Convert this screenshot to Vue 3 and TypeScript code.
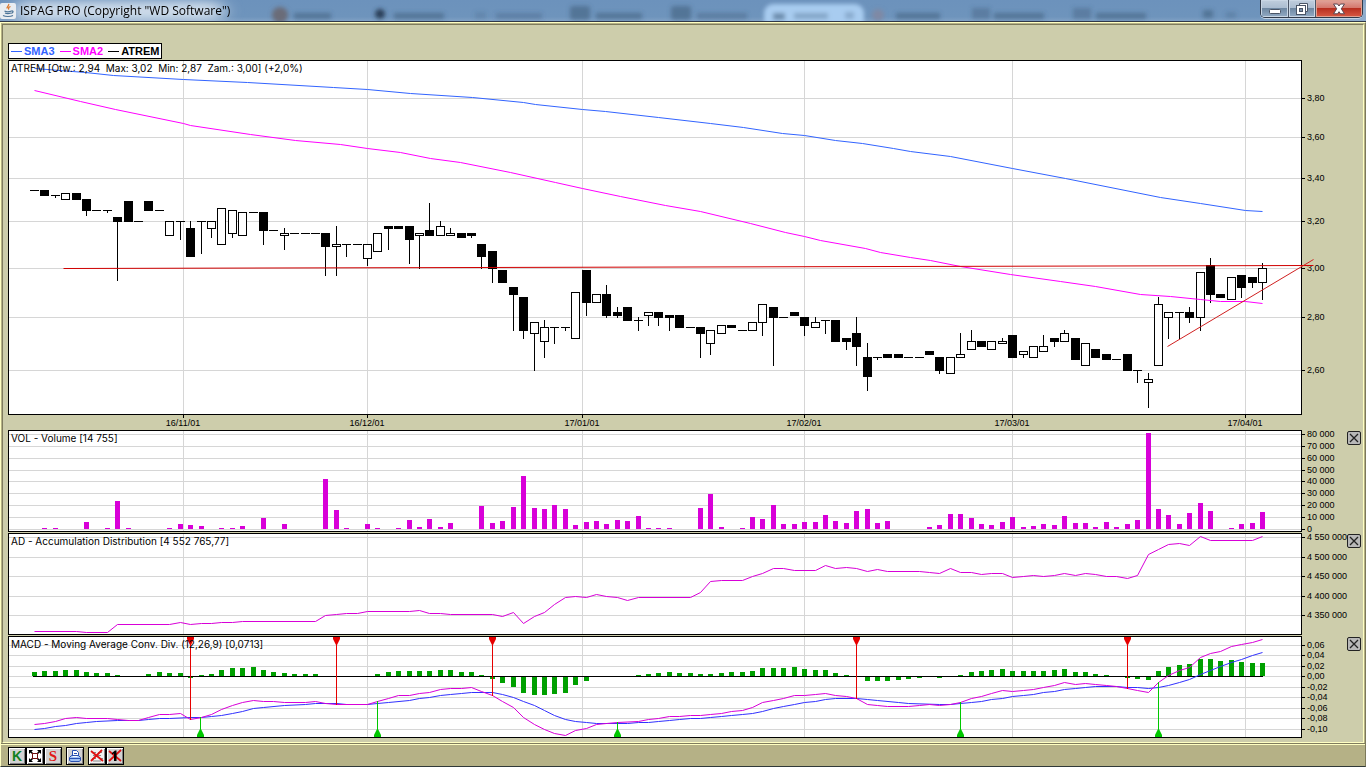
<script setup lang="ts">
type Kind = 'd' | 'f' | 'h'
type Candle = [Kind, number, number, number?, number?]
type Point = [number, number]

const step = 1228 / 118
const cx = (i: number): number => Math.round(34 + step * i)

// kind (dash, filled, hollow), body top, body bottom, high, low
const candles: Candle[] = [
  ['d', 190, 190], ['f', 190, 195], ['d', 195, 195, 195, 197], ['h', 193, 199], ['f', 193, 199],
  ['f', 199, 210, 199, 215], ['d', 210, 210], ['d', 210, 210, 210, 212], ['f', 217, 221, 217, 280], ['f', 201, 221],
  ['d', 221, 221], ['f', 201, 210], ['d', 210, 210], ['h', 221, 235], ['d', 221, 221, 221, 239],
  ['f', 228, 256, 221, 256], ['d', 221, 221, 221, 253], ['h', 221, 228, 221, 237], ['h', 208, 244], ['h', 210, 233, 210, 237],
  ['h', 212, 235], ['d', 212, 212], ['f', 212, 230, 212, 244], ['d', 230, 230], ['h', 233, 235, 228, 249],
  ['d', 233, 233], ['d', 233, 233], ['d', 233, 233], ['f', 233, 246, 233, 275], ['h', 244, 246, 226, 275],
  ['d', 244, 244, 244, 256], ['d', 244, 244], ['h', 244, 258, 244, 265], ['h', 233, 251], ['f', 226, 228, 226, 249],
  ['f', 226, 228], ['f', 226, 239, 226, 263], ['h', 233, 235, 233, 268], ['f', 230, 235, 203, 235], ['h', 226, 235, 221, 235],
  ['h', 233, 235, 228, 235], ['f', 233, 237], ['f', 233, 235, 233, 237], ['f', 244, 256, 244, 268], ['f', 251, 268, 251, 282],
  ['f', 270, 282], ['f', 287, 294, 287, 330], ['f', 297, 330, 297, 338], ['h', 322, 333, 322, 370], ['h', 327, 341, 320, 357],
  ['d', 327, 327, 327, 343], ['d', 327, 327, 327, 330], ['h', 292, 338], ['f', 270, 302, 270, 315], ['h', 294, 302],
  ['f', 294, 315, 285, 317], ['f', 312, 315, 307, 317], ['f', 307, 320], ['d', 320, 320, 317, 330], ['h', 312, 315, 312, 325],
  ['f', 312, 317, 312, 325], ['f', 315, 317, 315, 330], ['f', 315, 327], ['d', 327, 327], ['f', 327, 333, 327, 357],
  ['h', 330, 343, 330, 354], ['h', 325, 333], ['f', 325, 327], ['d', 330, 330], ['h', 322, 330],
  ['h', 304, 322, 304, 335], ['f', 307, 317, 307, 365], ['d', 317, 317], ['f', 312, 315], ['f', 317, 325, 317, 335],
  ['h', 322, 327, 317, 327], ['d', 320, 320, 320, 333], ['f', 320, 341], ['f', 338, 341, 338, 349], ['f', 333, 346, 317, 365],
  ['f', 357, 376, 343, 390], ['d', 357, 357, 357, 359], ['f', 354, 357], ['f', 354, 357], ['d', 357, 357],
  ['d', 357, 357], ['f', 351, 354], ['f', 357, 370, 357, 373], ['h', 357, 373], ['h', 354, 357, 333, 357],
  ['h', 341, 349, 330, 349], ['f', 341, 346], ['h', 341, 349], ['h', 341, 343, 338, 343], ['f', 335, 357],
  ['h', 351, 354, 351, 357], ['h', 346, 357], ['h', 346, 351, 335, 351], ['f', 338, 341, 338, 346], ['h', 333, 341, 330, 341],
  ['f', 338, 359], ['h', 343, 365], ['f', 349, 357], ['f', 354, 359], ['d', 359, 359],
  ['f', 354, 370], ['d', 370, 370, 370, 382], ['h', 379, 382, 373, 407], ['h', 304, 365, 297, 365], ['h', 312, 317, 312, 338],
  ['d', 312, 312, 312, 338], ['f', 312, 317, 307, 322], ['h', 272, 317, 272, 330], ['f', 265, 294, 258, 302], ['f', 294, 297],
  ['h', 277, 299], ['f', 275, 287, 275, 297], ['f', 277, 282, 277, 287], ['h', 268, 282, 263, 299],
]

const volume: number[] = [
  0, 1, 1, 0, 0, 7, 0, 1, 28, 1, 0, 0, 0, 1, 5, 4, 3, 0, 1, 1, 3, 0, 11, 0, 5, 0, 0, 0, 50, 19,
  1, 0, 5, 1, 0, 1, 9, 2, 10, 2, 6, 0, 0, 23, 6, 8, 22, 53, 21, 20, 24, 20, 4, 7, 8, 5, 9, 8, 13, 1,
  1, 1, 0, 0, 21, 35, 2, 0, 1, 12, 10, 24, 5, 5, 7, 7, 14, 8, 6, 18, 20, 6, 8, 0, 0, 0, 2, 4, 15, 15,
  11, 5, 4, 7, 12, 2, 3, 5, 4, 13, 6, 6, 2, 7, 2, 5, 9, 96, 20, 14, 5, 16, 26, 18, 0, 1, 5, 6, 17,
]

const histogram: number[] = [
  4, 5, 5, 6, 6, 4, 3, 3, 1, 0, 0, 2, 4, 3, 3, -1, 1, 2, 6, 8, 8, 9, 6, 4, 3, 2, 2, 2, 0, 0,
  0, 0, 0, 2, 4, 5, 5, 5, 5, 6, 6, 4, 4, 1, -2, -6, -10, -16, -18, -18, -17, -16, -8, -4, 0, 0, 0, 0, 1, 2,
  3, 4, 3, 3, 2, 2, 3, 4, 4, 5, 8, 8, 8, 9, 7, 6, 6, 3, 1, 0, -4, -4, -4, -3, -2, -1, 0, -1, 0, 1,
  4, 5, 6, 7, 5, 5, 5, 5, 6, 7, 4, 4, 2, 1, 0, -1, -2, -3, 5, 9, 11, 12, 17, 17, 15, 16, 14, 13, 13,
]

const toPoints = (pts: Point[]): string => pts.map(([x, y]) => `${x},${y}`).join(' ')
const seriesPoints = (pts: Point[]): string => pts.map(([i, y]) => `${cx(i)},${y}`).join(' ')

const sma3 = toPoints([
  [34, 68], [85, 72], [113, 75], [183, 79], [247, 82], [333, 87], [367, 89], [410, 93], [472, 97], [523, 102],
  [535, 104], [582, 109], [605, 111], [658, 117], [710, 123], [743, 127], [782, 133], [804, 135], [835, 140],
  [862, 143], [893, 148], [910, 151], [950, 156], [1012, 168], [1065, 178], [1160, 197], [1200, 203], [1245, 210], [1262, 211],
])
const sma2 = toPoints([
  [34, 90], [80, 101], [115, 109], [183, 123], [190, 125], [250, 134], [295, 140], [340, 144], [367, 148], [400, 152],
  [430, 158], [460, 162], [510, 172], [555, 182], [582, 188], [620, 196], [665, 205], [700, 211], [750, 223],
  [785, 232], [804, 236], [820, 240], [865, 248], [880, 252], [910, 257], [930, 260], [960, 266], [1010, 274],
  [1060, 281], [1095, 286], [1140, 294], [1170, 296], [1200, 299], [1220, 301], [1245, 301], [1262, 303],
])
const adLine = seriesPoints([
  [0, 631], [4, 631], [5, 632], [7, 632], [8, 624], [13, 624], [14, 622], [15, 624], [16, 623], [17, 623],
  [18, 622], [19, 622], [20, 621], [27, 621], [28, 615], [29, 614], [30, 613], [31, 613], [32, 611], [36, 611],
  [37, 610], [38, 613], [39, 613], [40, 614], [44, 614], [45, 616], [46, 612], [47, 623], [48, 616], [49, 612],
  [50, 604], [51, 597], [52, 596], [53, 597], [54, 594], [55, 596], [56, 597], [57, 600], [58, 597], [63, 597],
  [64, 592], [65, 581], [66, 580], [68, 580], [69, 576], [70, 573], [71, 568], [72, 568], [73, 570], [75, 570],
  [76, 565], [77, 568], [78, 567], [79, 568], [80, 571], [81, 569], [82, 571], [85, 571], [86, 572], [87, 573],
  [88, 568], [89, 572], [90, 572], [91, 574], [92, 573], [93, 573], [94, 577], [95, 576], [96, 575], [97, 576],
  [98, 575], [99, 573], [100, 575], [101, 573], [102, 574], [103, 576], [104, 576], [105, 578], [106, 575],
  [107, 554], [108, 549], [109, 544], [110, 543], [111, 545], [112, 536], [113, 540], [117, 540], [118, 536],
])
const macdLine = seriesPoints([
  [0, 724], [1, 723], [2, 721], [3, 718], [4, 717], [5, 718], [7, 718], [8, 719], [9, 720], [10, 720], [11, 717],
  [12, 714], [13, 714], [14, 713], [15, 719], [16, 717], [17, 714], [18, 709], [19, 705], [20, 702], [21, 700],
  [22, 701], [23, 701], [24, 702], [26, 702], [27, 701], [28, 703], [29, 704], [32, 704], [33, 701], [34, 698],
  [35, 695], [36, 695], [37, 693], [38, 692], [39, 689], [40, 688], [41, 688], [42, 687], [43, 691], [44, 695],
  [45, 701], [46, 707], [47, 717], [48, 724], [49, 729], [50, 733], [51, 735], [52, 730], [53, 728], [54, 724],
  [55, 723], [56, 722], [58, 721], [59, 719], [60, 718], [61, 716], [62, 716], [63, 715], [64, 715], [65, 714],
  [66, 713], [67, 711], [68, 710], [69, 707], [70, 702], [71, 700], [72, 698], [73, 695], [74, 695], [75, 694],
  [76, 693], [77, 695], [78, 696], [79, 698], [80, 704], [81, 705], [82, 706], [84, 706], [85, 705], [86, 704],
  [87, 705], [88, 704], [89, 702], [90, 698], [91, 696], [92, 693], [93, 690], [94, 691], [95, 690], [96, 689],
  [97, 687], [98, 685], [99, 682], [100, 684], [101, 683], [102, 684], [103, 685], [104, 686], [105, 688],
  [106, 690], [107, 692], [108, 682], [109, 675], [110, 670], [111, 667], [112, 657], [113, 653], [114, 651],
  [115, 646], [116, 644], [117, 642], [118, 639],
])
const signalLine = seriesPoints([
  [0, 729], [1, 728], [2, 726], [3, 725], [4, 723], [5, 722], [6, 721], [8, 720], [10, 720], [11, 719], [12, 718],
  [13, 718], [15, 717], [16, 717], [17, 716], [18, 715], [19, 713], [20, 711], [21, 708], [22, 707], [24, 705],
  [26, 704], [27, 703], [29, 703], [30, 704], [32, 704], [33, 703], [34, 702], [36, 700], [37, 698], [38, 697],
  [39, 695], [40, 694], [41, 693], [42, 692], [44, 692], [45, 694], [46, 697], [47, 701], [48, 705], [49, 710],
  [50, 715], [51, 719], [52, 721], [53, 722], [54, 723], [57, 723], [58, 722], [59, 722], [60, 721], [61, 720],
  [62, 719], [63, 718], [64, 718], [65, 717], [66, 716], [67, 715], [68, 714], [69, 713], [70, 711], [71, 708],
  [72, 706], [73, 704], [74, 702], [75, 701], [76, 699], [77, 698], [79, 698], [80, 699], [81, 700], [83, 702],
  [84, 703], [87, 704], [88, 704], [89, 703], [90, 702], [91, 701], [92, 699], [93, 698], [94, 696], [95, 695],
  [96, 694], [97, 692], [98, 691], [99, 689], [100, 688], [101, 687], [102, 686], [104, 686], [105, 687],
  [106, 687], [107, 688], [108, 687], [109, 685], [110, 682], [111, 679], [112, 674], [113, 670], [114, 666],
  [115, 662], [116, 659], [117, 655], [118, 652],
])

const sells: Point[] = [[190, 719], [336, 704], [492, 695], [856, 698], [1127, 688]]
const buys: Point[] = [[200, 717], [377, 701], [617, 722], [960, 702], [1158, 682]]

const months = [
  { x: 183, label: '16/11/01' },
  { x: 367, label: '16/12/01' },
  { x: 582, label: '17/01/01' },
  { x: 804, label: '17/02/01' },
  { x: 1012, label: '17/03/01' },
  { x: 1245, label: '17/04/01' },
]

interface Panel {
  id: string
  title: string
  top: number
  height: number
  closable: boolean
  ticks: { y: number; label: string }[]
}
const ticks = (rows: [number, string][]) => rows.map(([y, label]) => ({ y, label }))

const panels: Panel[] = [
  {
    id: 'price', title: 'ATREM [Otw.: 2,94  Max: 3,02  Min: 2,87  Zam.: 3,00] (+2,0%)', top: 60, height: 355, closable: false,
    ticks: ticks([[98, '3,80'], [137, '3,60'], [178, '3,40'], [221, '3,20'], [268, '3,00'], [317, '2,80'], [370, '2,60']]),
  },
  {
    id: 'vol', title: 'VOL - Volume [14 755]', top: 430, height: 102, closable: true,
    ticks: ticks([[434, '80 000'], [446, '70 000'], [458, '60 000'], [470, '50 000'], [481, '40 000'], [493, '30 000'], [505, '20 000'], [517, '10 000'], [529, '0']]),
  },
  {
    id: 'ad', title: 'AD - Accumulation Distribution [4 552 765,77]', top: 533, height: 102, closable: true,
    ticks: ticks([[537, '4 550 000'], [557, '4 500 000'], [576, '4 450 000'], [596, '4 400 000'], [615, '4 350 000']]),
  },
  {
    id: 'macd', title: 'MACD - Moving Average Conv. Div. (12,26,9) [0,0713]', top: 636, height: 102, closable: true,
    ticks: ticks([[645, '0,06'], [655, '0,04'], [666, '0,02'], [676, '0,00'], [687, '-0,02'], [697, '-0,04'], [708, '-0,06'], [718, '-0,08'], [729, '-0,10']]),
  },
]
</script>

<template>
  <div class="window">
    <header class="titlebar">
      <svg class="glass" viewBox="0 0 1366 21" preserveAspectRatio="none" aria-hidden="true">
        <defs>
          <filter id="soft" x="-30%" y="-60%" width="160%" height="220%"><feGaussianBlur stdDeviation="2" /></filter>
          <filter id="glow" x="-30%" y="-100%" width="160%" height="300%"><feGaussianBlur stdDeviation="9 5" /></filter>
        </defs>
        <g filter="url(#glow)" fill="#dce6f1">
          <rect x="14" y="1" width="210" height="20" rx="10" opacity=".85" />
          <rect x="1320" y="0" width="60" height="21" opacity=".35" />
        </g>
        <g filter="url(#soft)">
          <rect x="764" y="4" width="100" height="26" rx="9" fill="#a8ccf0" />
          <g fill="#42607f" opacity=".6">
            <rect x="294" y="13" width="37" height="6" />
            <rect x="394" y="13" width="50" height="6" />
            <rect x="475" y="12" width="11" height="7" opacity=".4" />
            <rect x="496" y="13" width="46" height="6" opacity=".6" />
            <rect x="570" y="6" width="20" height="14" rx="3" />
            <rect x="596" y="13" width="46" height="6" />
            <rect x="671" y="6" width="20" height="14" rx="3" />
            <rect x="697" y="13" width="50" height="6" opacity=".7" />
            <rect x="773" y="13" width="12" height="7" />
            <rect x="794" y="13" width="34" height="6" opacity=".6" />
            <rect x="845" y="12" width="9" height="7" opacity=".5" />
            <rect x="896" y="13" width="44" height="6" />
            <rect x="972" y="8" width="18" height="11" opacity=".7" />
            <rect x="994" y="13" width="50" height="6" />
            <rect x="1073" y="8" width="18" height="11" opacity=".7" />
            <rect x="1096" y="13" width="50" height="6" />
            <rect x="1203" y="10" width="10" height="8" />
            <rect x="1226" y="12" width="10" height="6" opacity=".5" />
          </g>
          <circle cx="280" cy="15" r="8" fill="#6b6c78" />
          <circle cx="380" cy="14" r="5" fill="#2c3f58" />
          <circle cx="878" cy="15" r="6" fill="#7f89a4" />
        </g>
      </svg>
      <svg class="java" width="16" height="16" viewBox="0 0 16 16" aria-hidden="true">
        <rect x="0" y="0" width="16" height="16" rx="2" fill="#e9edf1" />
        <path d="M8.5 1c1.500 1.500-2.500 2.800-1.300 4.500M10.500 3.500c-2 .9-2.500 1.600-1.500 3" fill="none" stroke="#d9772b" stroke-width="1.300" />
        <path d="M4.500 8c1.500.8 5 .8 7 0M5 10c1.500.7 4 .7 6 0M3 12.500c2.500 1.300 7.500 1.300 10 0M11.500 8c2-.4 2.200 1.700-.2 2.400" fill="none" stroke="#4b7396" stroke-width="1.200" />
      </svg>
      <h1>ISPAG PRO (Copyright "WD Software")</h1>
      <div class="controls">
        <button type="button" class="min" aria-label="Minimize">
          <svg width="14" height="14" viewBox="0 0 14 14"><rect x="1.500" y="7.500" width="11" height="4" rx="1" fill="#fff" stroke="#4a5566" /></svg>
        </button>
        <button type="button" class="max" aria-label="Restore">
          <svg width="14" height="14" viewBox="0 0 14 14">
            <path d="M4.500 1.500h8v8h-2M4.500 1.500v2" fill="#fff" stroke="#4a5566" />
            <rect x="1.500" y="3.500" width="9" height="9" fill="#fff" stroke="#4a5566" />
            <rect x="4.500" y="6.500" width="3" height="3" fill="#7d94ac" stroke="#4a5566" />
          </svg>
        </button>
        <button type="button" class="close" aria-label="Close">
          <svg width="14" height="14" viewBox="0 0 14 14">
            <path d="M1.500 2h4L7 4l1.500-2h4L9.300 6.800l3.200 5h-4L7 9.700l-1.500 2.100h-4l3.200-5z" fill="#fff" stroke="#5a4650" />
          </svg>
        </button>
      </div>
    </header>

    <main class="workspace">
      <div class="charts">
        <ul class="legend">
          <li class="sma3">SMA3</li>
          <li class="sma2">SMA2</li>
          <li class="atrem">ATREM</li>
        </ul>

        <section v-for="p in panels" :key="p.id" class="panel" :class="p.id">
          <div class="plot">
            <svg :viewBox="`8 ${p.top} 1294 ${p.height}`" :height="p.height" preserveAspectRatio="none" role="img" :aria-label="p.title">
              <rect x="8" :y="p.top" width="1294" :height="p.height" fill="#fff" />
              <g fill="#d6d6d6" shape-rendering="crispEdges">
                <rect v-for="t in p.ticks" :key="t.y" x="9" :y="t.y" width="1292" height="1" />
                <rect v-for="m in months" :key="m.x" :x="m.x" :y="p.top" width="1" :height="p.height" />
              </g>

              <template v-if="p.id === 'price'">
                <g shape-rendering="crispEdges">
                  <template v-for="(c, i) in candles" :key="i">
                    <rect v-if="c[4] !== undefined" :x="cx(i)" :y="c[3]" width="1" :height="c[4] - (c[3] ?? c[1]) + 1" />
                    <rect :x="cx(i) - 4" :y="c[1]" width="9" :height="c[2] - c[1] + 1" />
                    <rect v-if="c[0] === 'h'" :x="cx(i) - 3" :y="c[1] + 1" width="7" :height="c[2] - c[1] - 1" fill="#fff" />
                  </template>
                </g>
                <g class="lines">
                  <polyline :points="sma3" stroke="#3264ff" />
                  <polyline :points="sma2" stroke="#f0f" />
                </g>
              </template>

              <g v-else-if="p.id === 'vol'" fill="#d800d8" shape-rendering="crispEdges">
                <rect v-for="(v, i) in volume" :key="i" :x="cx(i) - 2" :y="529 - v" width="5" :height="v" />
              </g>

              <g v-else-if="p.id === 'ad'" class="lines">
                <polyline :points="adLine" stroke="#d800d8" />
              </g>

              <template v-else>
                <g fill="#00a000" shape-rendering="crispEdges">
                  <rect v-for="(v, i) in histogram" :key="i" :x="cx(i) - 2" :y="v > 0 ? 676 - v : 677" width="5" :height="Math.abs(v)" />
                  <rect x="33" y="676" width="1230" height="1" fill="#000" />
                </g>
                <g class="lines">
                  <polyline :points="signalLine" stroke="#3232ff" />
                  <polyline :points="macdLine" stroke="#d800d8" />
                </g>
                <g v-for="[x, y] in sells" :key="x" fill="#e60000">
                  <rect :x="x" y="637" width="1" :height="y - 636" />
                  <path :d="`M${x - 3} 637h7v2l-3 6h-1l-3-6z`" />
                </g>
                <g v-for="[x, y] in buys" :key="x" fill="#00c800">
                  <rect :x="x" :y="y" width="1" :height="737 - y" />
                  <path :d="`M${x - 3} 737h7v-2l-3-6h-1l-3 6z`" />
                </g>
              </template>

              <path :d="`M8 ${p.top}h1294v${p.height}H8zM9 ${p.top + 1}v${p.height - 2}h1292v-${p.height - 2}z`" fill-rule="evenodd" />
              <g v-if="p.id === 'price'" class="lines">
                <polyline points="63,268 1313,265" stroke="#d00000" />
                <polyline points="1167,346 1313,259" stroke="#d02020" />
              </g>
            </svg>
            <h2>{{ p.title }}</h2>
          </div>
          <div class="scale">
            <span v-for="t in p.ticks" :key="t.y" class="tick" :style="{ top: `${t.y - p.top - 5}px` }">{{ t.label }}</span>
            <button v-if="p.closable" type="button" :aria-label="`Close ${p.title}`">
              <svg width="12" height="12" viewBox="0 0 12 12"><path d="M2 2l8 8M10 2l-8 8" stroke="#222" stroke-width="1.300" /></svg>
            </button>
          </div>
          <div v-if="p.id === 'price'" class="dates">
            <span v-for="m in months" :key="m.x" :style="{ left: `${((m.x - 8) / 1294) * 100}%` }">{{ m.label }}</span>
          </div>
        </section>
      </div>

      <footer class="toolbar">
        <button type="button" aria-label="K">
          <span class="letter green">K</span>
        </button>
        <button type="button" class="pressed" aria-label="Fit to window">
          <svg width="14" height="14" viewBox="0 0 14 14">
            <path d="M1 1h4L1 5zM13 1v4L9 1zM1 13V9l4 4zM13 13H9l4-4z" />
            <path d="M2 2l3 3M12 2L9 5M2 12l3-3M12 12L9 9" stroke="#000" stroke-width="1.500" />
            <rect x="4.500" y="4.500" width="5" height="5" fill="#fff" stroke="#701010" />
          </svg>
        </button>
        <button type="button" aria-label="S">
          <span class="letter red">S</span>
        </button>
        <button type="button" class="gap" aria-label="Print">
          <svg width="14" height="14" viewBox="0 0 14 14">
            <path d="M4.500 7V1.500h4l2 2V7" fill="#fff" stroke="#2850b0" />
            <path d="M6 4.500h3" stroke="#2850b0" />
            <path d="M1.500 8.500l2-2h7l2 2v3l-1.500 1h-8l-1.500-1z" fill="#9fc0f4" stroke="#2850b0" />
            <path d="M4.500 7.500h5" stroke="#fff" />
            <path d="M2 9.500h10" stroke="#2850b0" />
          </svg>
        </button>
        <button type="button" class="gap light" aria-label="Delete all lines">
          <svg width="14" height="14" viewBox="0 0 14 14">
            <path d="M2 3.500h4M8 3.500h4M3 6.500h8M2 9.500h4M9 9.500h4M3 12h8" stroke="#888" />
            <path d="M1 2l12 10M12 1L1 12" stroke="#e01010" stroke-width="1.800" />
          </svg>
        </button>
        <button type="button" aria-label="Delete one line">
          <svg width="14" height="14" viewBox="0 0 14 14">
            <path d="M1 2l12 10M13 1L1 12" stroke="#e01010" stroke-width="1.800" />
            <path d="M4 4l3-2.500h1.500V12h-2.500V4.500L4 5.500z" />
          </svg>
        </button>
      </footer>
    </main>
  </div>
</template>

<style>
body {
  margin: 0;
  background: #fff;
}
</style>

<style scoped>
.window {
  margin-right: 4px;
  font-family: "Liberation Sans", Arial, sans-serif;
  color: #000;
}
.titlebar {
  position: relative;
  display: flex;
  align-items: flex-start;
  height: 21px;
  overflow: hidden;
  background: linear-gradient(#6c92bc, #6e94bc 80%, #7fa0c4);
  border-bottom: 1px solid #303848;
}
.glass {
  position: absolute;
  inset: 0;
  width: 100%;
  height: 100%;
}
.java {
  position: relative;
  margin: 3px 4px 0 0;
}
h1 {
  position: relative;
  margin: 0;
  font: 12px/21px "Open Sans", "Noto Sans", sans-serif;
  white-space: nowrap;
}
.controls {
  position: relative;
  display: flex;
  margin: 0 3px 0 auto;
  border: 1px solid #303a4a;
  border-top: 0;
  border-radius: 0 0 5px 5px;
  overflow: hidden;
  box-shadow: 0 1px 0 #c4d4e6;
}
.controls button {
  display: flex;
  align-items: center;
  justify-content: center;
  width: 28px;
  height: 17px;
  padding: 0;
  border: 0;
  border-right: 1px solid #4a5566;
  background: linear-gradient(#c0cedd, #aabcd0 48%, #6f88a2 50%, #93abc4);
  box-shadow: inset 0 0 0 1px #c9d6e4;
}
.controls .max {
  width: 27px;
}
.controls .close {
  width: 46px;
  border-right: 0;
  background: linear-gradient(#e0a69c, #d4766a 48%, #b83020 50%, #d85a44);
  box-shadow: inset 0 0 0 1px #e0a090;
}
.workspace {
  background: #b5b186;
  border: 1px solid #ffffc2;
  border-right-color: #7c795a;
  border-bottom-color: #303838;
  box-shadow: 0 1px 0 #a8b4c0;
}
.charts {
  margin: 1px;
  padding: 18px 0 3px 5px;
  background: #cdcdab;
  border: 1px solid #7f7c5e;
  border-right-color: #ffffc2;
  border-bottom-color: #ffffc2;
}
.legend {
  display: flex;
  gap: 5px;
  width: fit-content;
  height: 14px;
  margin: 0 0 1px;
  padding: 0 2px;
  list-style: none;
  background: #fff;
  border: 1px solid #000;
  font: bold 11px/15px "Liberation Sans", Arial, sans-serif;
}
.legend li {
  display: flex;
  align-items: center;
  gap: 2px;
}
.legend li::before {
  content: "";
  width: 11px;
  height: 1px;
  background: currentColor;
}
.sma3 {
  color: #3264ff;
}
.sma2 {
  color: #f0f;
}
.panel {
  display: grid;
  grid-template-columns: 1fr 61px;
  margin-bottom: 1px;
}
.plot {
  position: relative;
}
.plot svg {
  display: block;
  width: 100%;
}
.price .plot svg {
  overflow: visible;
}
.price .plot {
  z-index: 1;
}
.lines {
  fill: none;
  stroke-width: 1;
  transform: translate(0.5px, 0.5px);
}
h2 {
  position: absolute;
  top: 2px;
  left: 3px;
  margin: 0;
  font: 10px/13px Inter, "Liberation Sans", sans-serif;
  white-space: pre;
}
.scale {
  position: relative;
}
.tick {
  position: absolute;
  left: 0;
  display: flex;
  align-items: center;
  gap: 2px;
  font-size: 9px;
  line-height: 11px;
  white-space: pre;
}
.tick::before {
  content: "";
  width: 3px;
  height: 1px;
  background: #000;
}
.scale button {
  position: absolute;
  top: 1px;
  right: 2px;
  display: flex;
  align-items: center;
  justify-content: center;
  width: 14px;
  height: 14px;
  padding: 0;
  border: 1px solid #222;
  border-radius: 2px;
  background: #b8b8b8;
}
.dates {
  position: relative;
  height: 14px;
}
.dates span {
  position: absolute;
  top: 0;
  width: 40px;
  margin-left: -20px;
  font-size: 9px;
  line-height: 11px;
  text-align: center;
}
.dates span::before {
  content: "";
  display: block;
  width: 1px;
  height: 3px;
  margin-left: 20px;
  background: #000;
}
.toolbar {
  display: flex;
  padding: 2px 0 1px 5px;
  border-top: 1px solid #ffffc2;
  box-shadow: 0 -1px 0 #7f7c5e;
}
.toolbar {
  padding-left: 7px;
}
.toolbar button {
  display: flex;
  align-items: center;
  justify-content: center;
  width: 18px;
  height: 18px;
  padding: 0;
  border: 1px solid #000;
  background: #d2d2d2;
  box-shadow: inset 1px 1px 0 #fff, inset -1px -1px 0 #808080;
}
.toolbar .gap {
  margin-left: 4px;
}
.toolbar .pressed {
  background: #fff;
}
.toolbar .light {
  background: #f0f0f0;
}
.letter {
  font: bold 15px/16px "Liberation Serif", "Times New Roman", serif;
}
.green {
  font: bold 14px/16px "Liberation Sans", Arial, sans-serif;
  color: #108020;
}
.red {
  color: #e01818;
}
</style>
